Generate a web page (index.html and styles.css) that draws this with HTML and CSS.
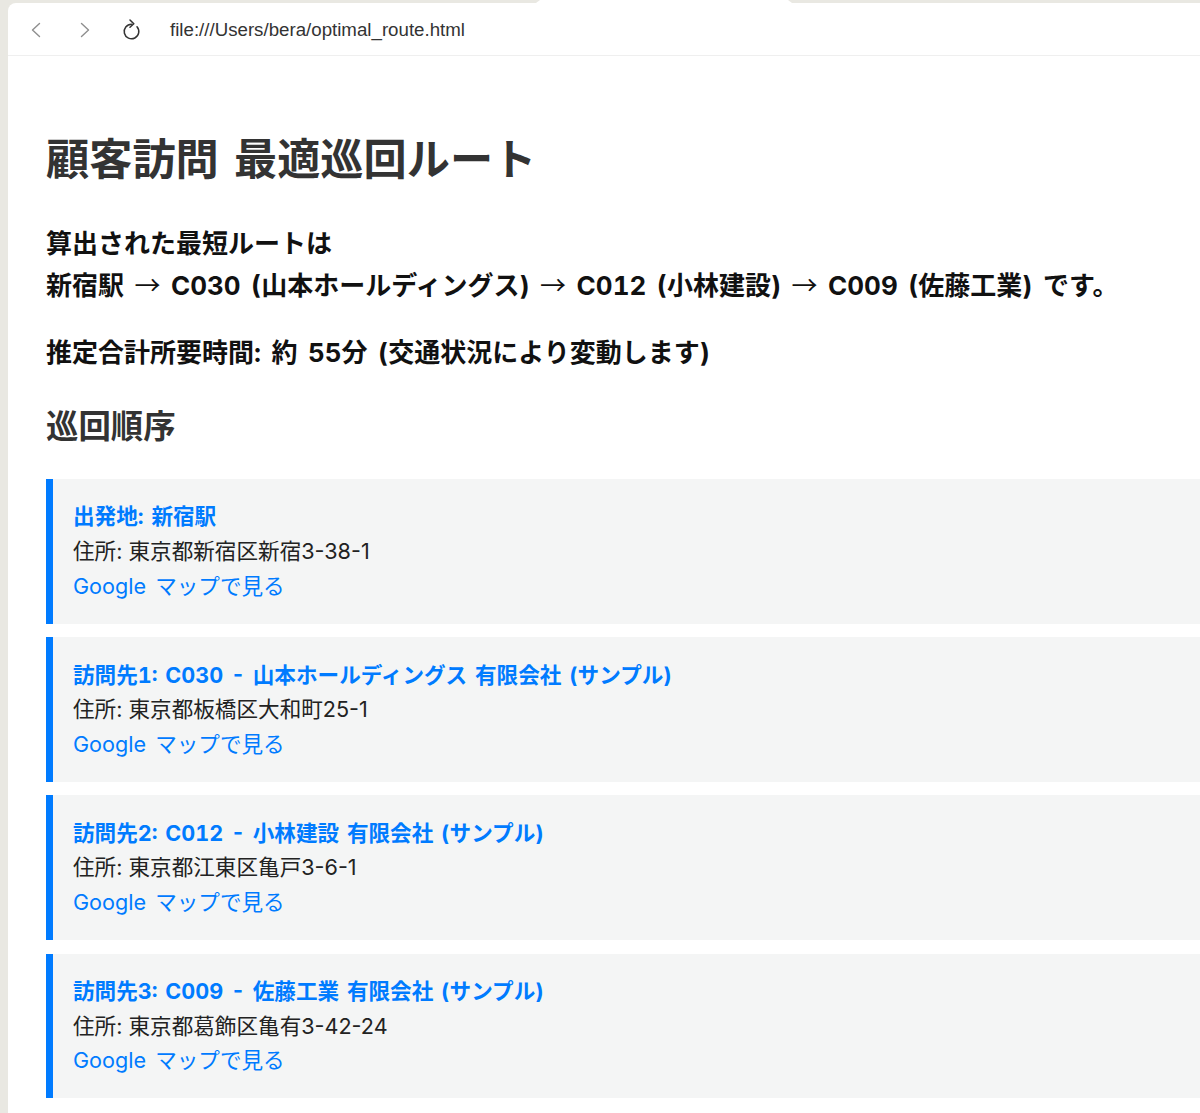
FILE: index.html
```html
<!DOCTYPE html>
<html lang="ja">
<head>
    <meta charset="UTF-8">
    <meta name="viewport" content="width=device-width, initial-scale=1.0">
    <title>顧客訪問 最適巡回ルート</title>
    <link rel="stylesheet" href="styles.css">
</head>
<body>
    <div class="tab-notch"></div>
    <div class="window">
        <div class="toolbar">
            <svg class="nav-icon" width="14" height="18" viewBox="0 0 14 18"><path d="M10.5 2.5 3.5 9l7 6.5" fill="none" stroke="#8e8e8e" stroke-width="1.4" stroke-linecap="round" stroke-linejoin="round"/></svg>
            <svg class="nav-icon nav-forward" width="14" height="18" viewBox="0 0 14 18"><path d="M3.5 2.5 10.5 9l-7 6.5" fill="none" stroke="#8e8e8e" stroke-width="1.4" stroke-linecap="round" stroke-linejoin="round"/></svg>
            <svg class="reload-icon" width="20" height="22" viewBox="0 0 20 22"><path d="M9.5 5.2A7.3 7.3 0 1 0 15 7.7" fill="none" stroke="#333" stroke-width="1.5" stroke-linecap="round"/><path d="M8 1 11.8 4.8 8 8.2" fill="none" stroke="#333" stroke-width="1.5" stroke-linecap="round" stroke-linejoin="round"/></svg>
            <span class="url">file:///Users/bera/optimal_route.html</span>
        </div>
        <div class="content">
            <h1>顧客訪問 最適巡回ルート</h1>
            <p class="summary">算出された最短ルートは<br>新宿駅 <span class="arrow">→</span> C030 (山本ホールディングス) <span class="arrow">→</span> C012 (小林建設) <span class="arrow">→</span> C009 (佐藤工業) です。</p>
            <p class="summary">推定合計所要時間: 約 55分 (交通状況により変動します)</p>
            <h2>巡回順序</h2>
            <ul class="stops">
                <li class="stop">
                    <strong>出発地: 新宿駅</strong><br>
                    住所: 東京都新宿区新宿3-38-1<br>
                    <a href="#">Google マップで見る</a>
                </li>
                <li class="stop">
                    <strong>訪問先1: C030 - 山本ホールディングス 有限会社 (サンプル)</strong><br>
                    住所: 東京都板橋区大和町25-1<br>
                    <a href="#">Google マップで見る</a>
                </li>
                <li class="stop">
                    <strong>訪問先2: C012 - 小林建設 有限会社 (サンプル)</strong><br>
                    住所: 東京都江東区亀戸3-6-1<br>
                    <a href="#">Google マップで見る</a>
                </li>
                <li class="stop">
                    <strong>訪問先3: C009 - 佐藤工業 有限会社 (サンプル)</strong><br>
                    住所: 東京都葛飾区亀有3-42-24<br>
                    <a href="#">Google マップで見る</a>
                </li>
            </ul>
        </div>
    </div>
</body>
</html>
```

FILE: styles.css
```css
html, body {
    height: 100%;
}
body {
    margin: 0;
    overflow: hidden;
    background: #e9e8e2;
    color: #111;
    font-family: 'Inter', 'Noto Sans CJK JP', sans-serif;
}
.tab-notch {
    position: absolute;
    top: 0;
    left: 536px;
    width: 256px;
    height: 3px;
    background: #fff;
    clip-path: polygon(4px 0, 252px 0, 100% 100%, 0 100%);
}
.window {
    box-sizing: border-box;
    height: calc(100% - 3px);
    margin: 3px 0 0 8px;
    background: #fff;
    border-top-left-radius: 8px;
}
.toolbar {
    display: flex;
    align-items: center;
    box-sizing: border-box;
    height: 53px;
    padding: 2px 0 0 21px;
    border-bottom: 1px solid #efefef;
}
.nav-icon {
    margin-right: 35px;
}
.reload-icon {
    margin-left: -5px;
}
.url {
    margin-left: 28px;
    font-family: 'Liberation Sans', sans-serif;
    font-size: 18.7px;
    color: #333;
}
.content {
    padding-left: 38px;
}
h1 {
    margin: 75px 0 0;
    font-size: 43.2px;
    line-height: 56px;
    font-weight: bold;
    word-spacing: 5px;
    color: #333;
}
.summary {
    margin: 0 0 25px;
    font-size: 26px;
    line-height: 42px;
    font-weight: bold;
    font-variant-numeric: tabular-nums;
    word-spacing: 3.5px;
    color: #111;
}
.arrow {
    font-family: 'Noto Sans CJK JP', sans-serif;
    font-weight: normal;
    line-height: 0;
}
h1 + .summary {
    margin-top: 36px;
}
h2 {
    margin: 29px 0 0;
    font-size: 32.4px;
    line-height: 48px;
    font-weight: bold;
    color: #333;
}
.stops {
    list-style: none;
    margin: 28px 0 0;
    padding: 0;
}
.stop {
    margin-bottom: 13.5px;
    padding: 20.3px 0 20.3px 20px;
    border-left: 7px solid #007bff;
    background: #f4f5f5;
    font-size: 21.6px;
    line-height: 34.7px;
    color: #222;
}
.stop strong {
    font-variant-numeric: tabular-nums;
    word-spacing: 2px;
    color: #007bff;
}
.stop a {
    word-spacing: 3px;
    color: #007bff;
    text-decoration: none;
}
```
